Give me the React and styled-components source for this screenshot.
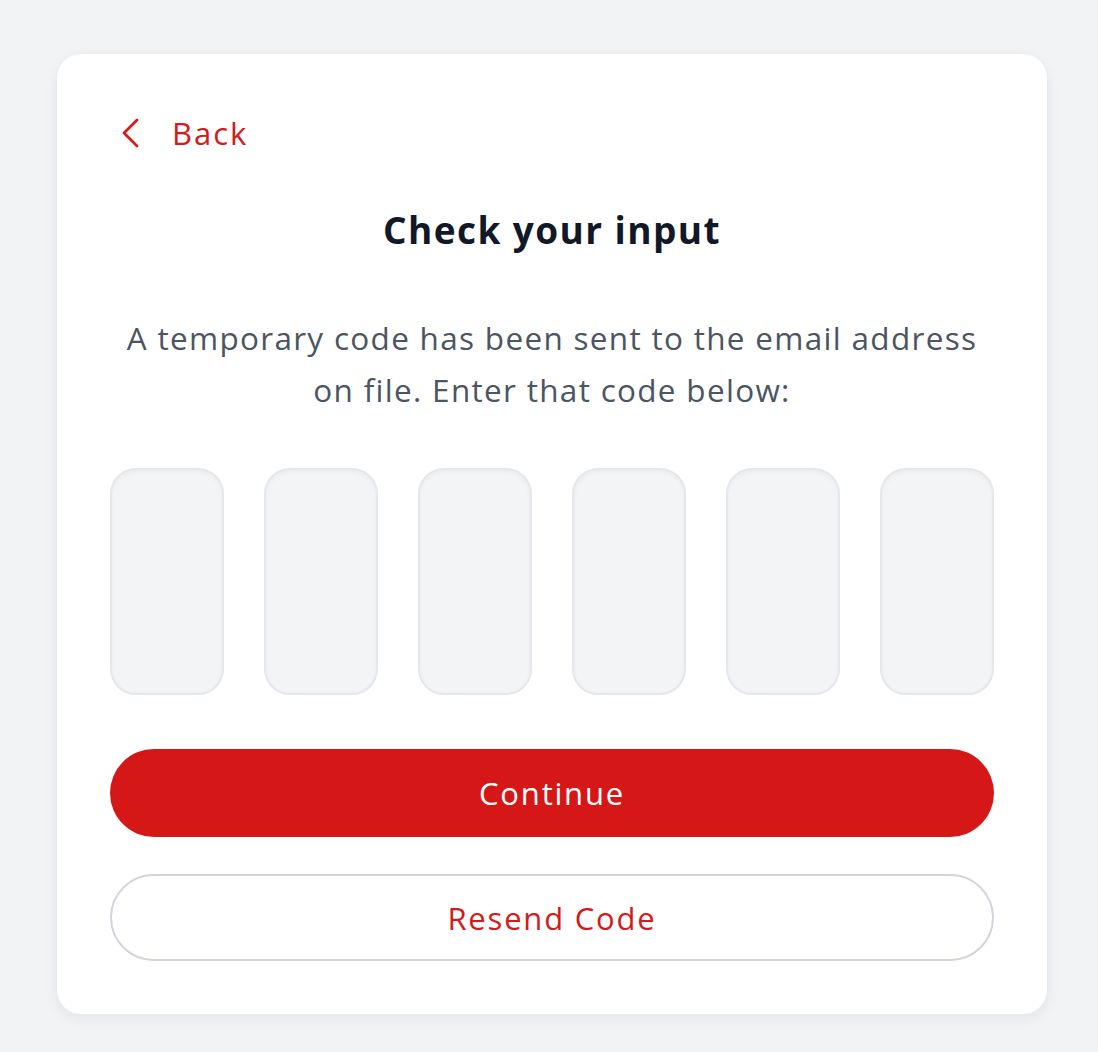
import React from 'react';
import styled, { createGlobalStyle } from 'styled-components';

const GlobalStyle = createGlobalStyle`
  body {
    margin: 0;
    background: #f2f3f5;
    font-family: 'Open Sans', 'Lato', sans-serif;
  }
`;

const Page = styled.div`
  padding: 54px 51px 40px 57px;
`;

const Card = styled.div`
  background: #ffffff;
  border-radius: 24px;
  box-shadow: 0 4px 14px rgba(17, 24, 39, 0.07);
  padding: 55px 53px 53px;
  display: flex;
  flex-direction: column;
`;

const BackLink = styled.a`
  display: flex;
  align-items: center;
  gap: 32px;
  height: 48px;
  padding-left: 10px;
  color: #d61919;
  font-size: 31px;
  letter-spacing: 2px;
  text-decoration: none;
  cursor: pointer;
  align-self: flex-start;
`;

const Title = styled.h1`
  margin: 46px 0 0;
  text-align: center;
  font-size: 37px;
  line-height: 54px;
  font-weight: 700;
  letter-spacing: 1.4px;
  color: #111827;
`;

const Text = styled.p`
  margin: 55px 0 0;
  text-align: center;
  font-size: 31.5px;
  line-height: 52px;
  letter-spacing: 1.3px;
  color: #4b5563;
`;

const CodeRow = styled.div`
  margin-top: 52px;
  display: grid;
  grid-template-columns: repeat(6, 1fr);
  gap: 40px;
`;

const CodeBox = styled.input`
  height: 227px;
  box-sizing: border-box;
  min-width: 0;
  border: 2px solid #e5e7eb;
  border-radius: 26px;
  background: #f3f4f6;
  box-shadow: inset 0 2px 4px rgba(0, 0, 0, 0.04);
  outline: none;
`;

const Button = styled.button`
  box-sizing: border-box;
  width: 100%;
  height: ${p => (p.$primary ? '88px' : '87px')};
  margin-top: ${p => (p.$primary ? '54px' : '37px')};
  border-radius: 44px;
  border: ${p => (p.$primary ? 'none' : '2px solid #d1d5db')};
  background: ${p => (p.$primary ? '#d61717' : '#ffffff')};
  color: ${p => (p.$primary ? '#ffffff' : '#d61919')};
  font-family: inherit;
  font-size: 31px;
  letter-spacing: 1.8px;
  cursor: pointer;
`;

function Chevron() {
  return (
    <svg width="20" height="30" viewBox="0 0 20 30" fill="none">
      <path d="M17 2 L4 15 L17 28" stroke="#d61919" strokeWidth="2.8" strokeLinecap="round" strokeLinejoin="round" />
    </svg>
  );
}

export default function App() {
  return (
    <Page>
      <GlobalStyle />
      <Card>
        <BackLink>
          <Chevron />
          Back
        </BackLink>
        <Title>Check your input</Title>
        <Text>
          A temporary code has been sent to the email address
          <br />
          on file. Enter that code below:
        </Text>
        <CodeRow>
          {[0, 1, 2, 3, 4, 5].map(i => (
            <CodeBox key={i} maxLength={1} />
          ))}
        </CodeRow>
        <Button $primary>Continue</Button>
        <Button>Resend Code</Button>
      </Card>
    </Page>
  );
}
